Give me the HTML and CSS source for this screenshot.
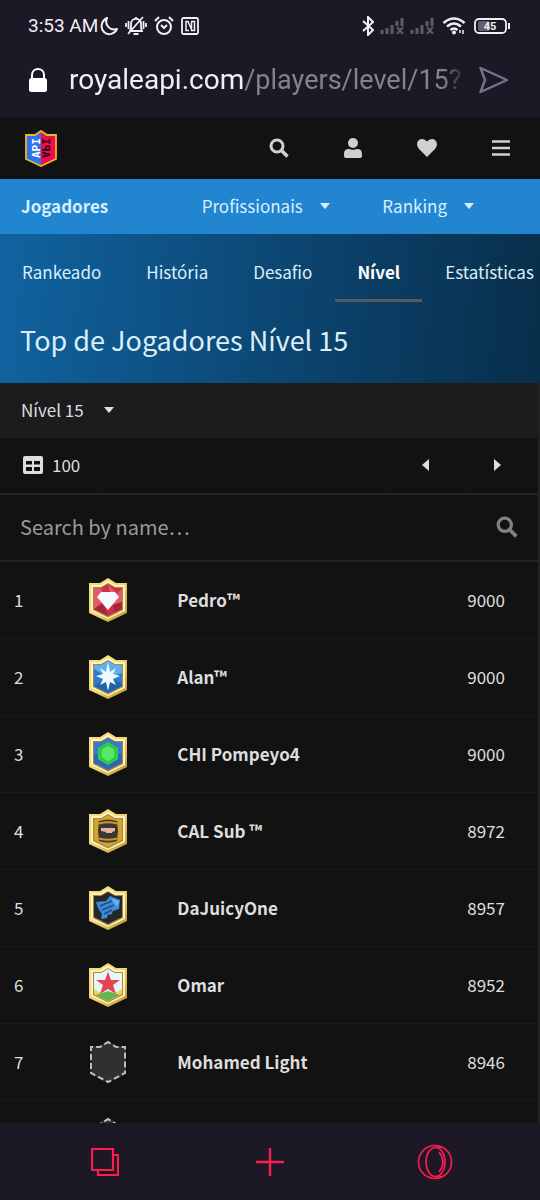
FILE: index.html
```html
<!DOCTYPE html>
<html lang="pt">
<head>
<meta charset="utf-8">
<meta name="viewport" content="width=device-width, initial-scale=1">
<title>Top de Jogadores Nível 15</title>
<link rel="stylesheet" href="styles.css">
</head>
<body>
<svg class="defs" aria-hidden="true">
  <defs>
    <linearGradient id="gold" x1="0" y1="0" x2="1" y2="1"><stop offset="0" stop-color="#f3dd83"/><stop offset=".5" stop-color="#f2d56c"/><stop offset="1" stop-color="#b98f2c"/></linearGradient>
    <symbol id="frame" viewBox="0 0 38 44">
      <path d="M19 0 27 5H38V35L19 44 0 35V5H11Z" fill="url(#gold)"/>
      <path d="M19 2.500 26.500 7H36V33L19 41 2 33V7H11.500Z" fill="#fff3bd"/>
      <path d="M19 5 26 9H34V32L19 39.500 4 32V9H12Z" fill="#a58a45"/>
    </symbol>
    <symbol id="empty" viewBox="0 0 38 44">
      <path d="M19 1 28 6H37V34L19 43 1 34V6H10Z" fill="#303030"/>
      <path d="M19 2 27 7H36V33L19 42 2 33V7H11Z" fill="none" stroke="#bdbdbd" stroke-width="2" stroke-dasharray="6 3" stroke-dashoffset="3"/>
    </symbol>
    <symbol id="search" viewBox="0 0 20 20"><circle cx="8" cy="8" r="6" fill="none" stroke="currentColor" stroke-width="3"/><path d="m12.500 12.500 6 6" stroke="currentColor" stroke-width="3.500"/></symbol>
    <symbol id="caret" viewBox="0 0 10 6"><path d="M0 0H10L5.500 5.500Q5 6 4.500 5.500Z" fill="currentColor"/></symbol>
    <symbol id="signal" viewBox="0 0 24 16"><path d="M2 12v4M7 10v6M12 7v9M17 3v5M22 0v8" stroke="currentColor" stroke-width="3"/><path d="m17 9 6 7m0-7-6 7" stroke="currentColor" stroke-width="2"/></symbol>
  </defs>
</svg>

<header class="browser">
  <div class="status">
    <div class="status-group">
      <span class="clock">3:53 AM</span>
      <svg width="18" height="20" viewBox="0 0 18 20"><path d="M7 2C1 5 0 12 4 16c4 4 11 2 13-3C10 15 4 9 7 2Z" fill="none" stroke="currentColor" stroke-width="2" stroke-linejoin="round"/></svg>
      <svg class="bell" width="22" height="20" viewBox="0 0 22 20"><path d="M5 15H17L16 12V8C16 1 6 1 6 8v4Z M11 3V1M18 1 3 18M1 7v4M3.500 5v8M21 7v4M18.500 5v8M8.500 18h5" fill="none" stroke="currentColor" stroke-width="1.800"/></svg>
      <svg width="20" height="20" viewBox="0 0 20 20"><circle cx="10" cy="11" r="7" fill="none" stroke="currentColor" stroke-width="2"/><path d="M1 5 5 1M19 5l-4-4M7 9l3 3 3-3" fill="none" stroke="currentColor" stroke-width="2"/></svg>
      <svg class="nfc" width="18" height="18" viewBox="0 0 18 18"><rect x="1" y="1" width="16" height="16" rx="1.500" fill="none" stroke="currentColor" stroke-width="1.800"/><path d="M8 13.500H5V4.500H7L11 13.500M10 4.500H13.500V13.500H10.500V4.500" fill="none" stroke="currentColor" stroke-width="1.500"/></svg>
    </div>
    <div class="status-group">
      <svg width="12" height="20" viewBox="0 0 12 20"><path d="M1 5 11 14 6 19V1l5 5L1 15" fill="none" stroke="currentColor" stroke-width="2"/></svg>
      <svg class="dim" width="24" height="16"><use href="#signal"/></svg>
      <svg class="dim signal-two" width="24" height="16"><use href="#signal"/></svg>
      <svg class="wifi" width="24" height="18" viewBox="0 0 24 18"><path d="M1.500 6Q12-3 22.500 6M5 9.500q7-6 14 0M8.500 13q3.500-3 7 0" fill="none" stroke="currentColor" stroke-width="2.600"/><circle cx="12" cy="15.500" r="2"/><path d="M18 16v-3m3 0v4" stroke="currentColor" stroke-width="1.500"/></svg>
      <svg class="battery" width="36" height="16" viewBox="0 0 36 16"><rect x="4" y="3" width="12" height="10" rx="2" fill="#625f6c"/><rect x="1" y="1" width="31" height="14" rx="4" fill="none" stroke="currentColor" stroke-width="1.800"/><path d="M35 5v6" stroke="currentColor" stroke-width="2"/><text x="16" y="12" text-anchor="middle" class="charge">45</text></svg>
    </div>
  </div>
  <div class="address">
    <svg width="18" height="26" viewBox="0 0 18 26"><path d="M3 12V8C3 0 15 0 15 8v4" fill="none" stroke="#fff" stroke-width="2"/><rect x="0" y="11" width="18" height="14" rx="2.500" fill="#fff"/></svg>
    <button class="url" type="button">royaleapi.com<span>/players/level/15?</span></button>
    <button class="plain send" type="button" aria-label="Enviar"><svg width="30" height="26" viewBox="0 0 30 26"><path d="M1.500 1 28 13 1.500 25 6 13Z" fill="none" stroke="currentColor" stroke-width="2.400" stroke-linejoin="round"/></svg></button>
  </div>
</header>

<main class="page">
  <header class="site">
    <a class="logo" href="#" aria-label="RoyaleAPI">
      <svg width="32" height="37" viewBox="0 0 32 37"><path d="M16 1 22 5H31V29L16 36 1 29V5H10Z" fill="#2e72f0"/><path d="M16 1 22 5H31V29L16 36Z" fill="#f20b48"/><g class="logo-text"><text transform="translate(15 28) rotate(-90)" fill="#fff">API</text><text transform="translate(17 28) scale(-1 1) rotate(-90)" fill="#220817">API</text></g><path d="M16 1 22 5H31V29L16 36 1 29V5H10Z" fill="none" stroke="#e9b72e" stroke-width="1.800"/></svg>
    </a>
    <nav class="tools">
      <button class="plain" type="button" aria-label="Buscar"><svg width="20" height="20"><use href="#search"/></svg></button>
      <button class="plain" type="button" aria-label="Perfil"><svg width="18" height="20" viewBox="0 0 18 20"><circle cx="9" cy="5" r="5" fill="currentColor"/><path d="M0 17c0-4 1-6 5-6 2 1 6 1 8 0 4 0 5 2 5 6v1q0 2-2 2H2q-2 0-2-2Z" fill="currentColor"/></svg></button>
      <button class="plain" type="button" aria-label="Favoritos"><svg width="20" height="18" viewBox="0 0 20 18"><path d="M10 18 2 10C-2 5 1 0 5 0q3 0 5 2.500Q12 0 15 0c4 0 7 5 3 10Z" fill="currentColor"/></svg></button>
      <button class="plain" type="button" aria-label="Menu"><svg width="18" height="16" viewBox="0 0 18 16"><path d="M0 1.500h18M0 8h18M0 14.500h18" stroke="currentColor" stroke-width="2.600"/></svg></button>
    </nav>
  </header>

  <nav class="sections">
    <a class="current" href="#">Jogadores</a>
    <button type="button" aria-haspopup="true">Profissionais<svg width="10" height="6"><use href="#caret"/></svg></button>
    <button type="button" aria-haspopup="true">Ranking<svg width="10" height="6"><use href="#caret"/></svg></button>
  </nav>

  <section class="hero">
    <nav class="tabs">
      <a href="#">Rankeado</a><a href="#">História</a><a href="#">Desafio</a><a class="active" href="#" aria-current="page">Nível</a><a href="#">Estatísticas</a>
    </nav>
    <h1>Top de Jogadores Nível 15</h1>
  </section>

  <section class="panel">
    <div class="filter">
      <label class="level">
        <select aria-label="Nível"><option>Nível 15</option></select>
        <svg width="10" height="6"><use href="#caret"/></svg>
      </label>
    </div>
    <div class="pager">
      <button class="size" type="button"><svg width="20" height="18" viewBox="0 0 20 18"><path fill-rule="evenodd" d="M2 0H18Q20 0 20 2V16Q20 18 18 18H2Q0 18 0 16V2Q0 0 2 0ZM3 5V8.500H9V5ZM11 5V8.500H17V5ZM3 11V15H9V11ZM11 11V15H17V11Z" fill="currentColor"/></svg>100</button>
      <button class="step prev" type="button" aria-label="Anterior"><svg width="8" height="12" viewBox="0 0 8 12"><path d="M7 0V12L0 6Z" fill="currentColor"/></svg></button>
      <button class="step next" type="button" aria-label="Próxima"><svg width="8" height="12" viewBox="0 0 8 12"><path d="M1 0V12L8 6Z" fill="currentColor"/></svg></button>
    </div>
    <label class="find">
      <input type="text" placeholder="Search by name…" aria-label="Search by name">
      <svg width="22" height="22"><use href="#search"/></svg>
    </label>
    <table class="players">
      <tbody>
        <tr><td>1</td><td><svg class="badge" viewBox="0 0 38 44"><use href="#frame"/><path d="M19 6 26 10H33V31L19 38 5 31V10H12Z" fill="#cc3044"/><path d="M5 10 12 10 16 22 5 31ZM19 6 28 16 33 10V24L24 27Z" fill="#e25a68"/><path d="M5 31 14 26 19 38ZM24 27 33 24V31L26 34Z" fill="#a82537"/><path d="M12 14H26L30 19 19 32 8 19Z" fill="#f4faff"/></svg></td><td>Pedro™</td><td>9000</td></tr>
        <tr><td>2</td><td><svg class="badge" viewBox="0 0 38 44"><use href="#frame"/><path d="M19 6 26 10H33V31L19 38 5 31V10H12Z" fill="#2c7ccf"/><path d="M19 6 26 10H33V18L19 22 5 14V10H12Z" fill="#60b0ed"/><path d="M19 22 33 29V31L19 38 5 31Z" fill="#2162ac"/><path d="M19 7 21 17 27 13 24 19 31 21 24 24 27 30 21 27 19 36 17 27 11 30 14 24 7 21 14 19 11 13 17 17Z" fill="#effaff"/></svg></td><td>Alan™</td><td>9000</td></tr>
        <tr><td>3</td><td><svg class="badge" viewBox="0 0 38 44"><use href="#frame"/><path d="M19 6 26 10H33V31L19 38 5 31V10H12Z" fill="#2f66b5"/><path d="M5 10H12L19 6 26 10H33V22H5Z" fill="#3c78c4"/><path d="M19 10 29 16V27L19 33 9 27V16Z" fill="#2ed246"/><path d="M19 13 26 17V26L19 30 12 26V17Z" fill="#55e967" stroke="#22b53a"/></svg></td><td>CHI Pompeyo4</td><td>9000</td></tr>
        <tr><td>4</td><td><svg class="badge" viewBox="0 0 38 44"><use href="#frame"/><path d="M19 6 26 10H33V31L19 38 5 31V10H12Z" fill="#d4a12b"/><path d="M10 12Q19 9 28 12L29 22 28 32Q19 35 10 32L9 22Z" fill="#393837"/><path d="M10 14.500Q19 12 28 14.500M10 29.500Q19 32 28 29.500" fill="none" stroke="#c9992f" stroke-width="2"/><path d="M12 19H26V22L23 23V24H17V23L12 22Z" fill="#e9b29b"/></svg></td><td>CAL Sub ™</td><td>8972</td></tr>
        <tr><td>5</td><td><svg class="badge" viewBox="0 0 38 44"><use href="#frame"/><path d="M19 6 26 10H33V31L19 38 5 31V10H12Z" fill="#25282b"/><path d="M7 16 17 15 21 10 31 14 30 23 24 25 22 29 19 28 18 32 12 33 13 28 9 22Z" fill="#3b8bdd"/><path d="m11 20 12-5M13 24l12-5M15 28l8-4" stroke="#214f86" stroke-width="1.500"/><path d="m22 12 8 3-2 6Z" fill="#65b3f5"/></svg></td><td>DaJuicyOne</td><td>8957</td></tr>
        <tr><td>6</td><td><svg class="badge" viewBox="0 0 38 44"><use href="#frame"/><path d="M19 6 26 10H33V31L19 38 5 31V10H12Z" fill="#e8f4f5"/><path d="M5 26 12 30H26L33 26V31L19 38 5 31Z" fill="#f0d64f"/><path d="M7 32 19 28 31 32 19 38Z" fill="#5fb94b"/><path d="M19 9 22 17H31L24 22 27 31 19 26 11 31 14 22 7 17H16Z" fill="#e34352"/></svg></td><td>Omar</td><td>8952</td></tr>
        <tr><td>7</td><td><svg class="badge"><use href="#empty"/></svg></td><td>Mohamed Light</td><td>8946</td></tr>
        <tr><td></td><td><svg class="badge"><use href="#empty"/></svg></td><td></td><td></td></tr>
      </tbody>
    </table>
  </section>
</main>

<footer class="dock">
  <button class="plain" type="button" aria-label="Abas"><svg width="28" height="28" viewBox="0 0 28 28"><path d="M1 1H22V22H1ZM22 7h5V27H7V22" fill="none" stroke="currentColor" stroke-width="2.200"/></svg></button>
  <button class="plain" type="button" aria-label="Nova aba"><svg width="28" height="28" viewBox="0 0 28 28"><path d="M14 0V28M0 14H28" stroke="currentColor" stroke-width="2.400"/></svg></button>
  <button class="plain" type="button" aria-label="Opera"><svg width="36" height="36" viewBox="0 0 36 36"><g fill="none" stroke="currentColor" stroke-width="1.600"><circle cx="18" cy="18" r="16.500"/><ellipse cx="18.500" cy="18" rx="9.500" ry="14.500"/><path d="M18.500 3.500q4-1 7 0M18.500 32.500q4 1 7 0M22 8q8 10 0 20"/></g></svg></button>
</footer>
</body>
</html>
```

FILE: styles.css
```css
* { box-sizing: border-box; }

body {
  margin: 0;
  height: 100vh;
  display: flex;
  flex-direction: column;
  overflow: hidden;
  background: #121212;
  color: #dedede;
  font-family: "Noto Sans CJK SC", "Open Sans", sans-serif;
  font-size: 17px;
  line-height: 24px;
}

svg { display: block; flex: none; }
a { color: inherit; text-decoration: none; }
button, input, select { font: inherit; color: inherit; }
.defs { position: absolute; width: 0; height: 0; }

button {
  margin: 0;
  padding: 0;
  border: 0;
  background: none;
  text-align: left;
}

.plain { display: grid; place-items: center; }

/* Browser chrome */
.browser {
  flex: none;
  background: #1c1826;
  color: #f0eff3;
  font-family: Roboto, sans-serif;
}

.status {
  display: flex;
  align-items: center;
  justify-content: space-between;
  height: 52px;
  padding: 0 30px 0 28px;
}

.status-group { display: flex; align-items: center; gap: 6px; }
.status-group:first-child { gap: 5px; }
.clock { margin-right: -3px; font-size: 19px; }
.bell { margin: 0 2px; }
.nfc { margin-left: 2px; }
.dim { color: #5e5b67; }
.signal-two { margin-right: 2px; }
.wifi { fill: currentColor; margin-right: 2px; }
.charge { fill: #f0eff3; font-size: 11px; font-weight: 700; }

.address {
  display: flex;
  align-items: center;
  height: 65px;
  padding: 0 31px 10px 29px;
}

.url {
  flex: 1;
  min-width: 0;
  margin: 0 12px 0 22px;
  overflow: hidden;
  white-space: nowrap;
  font-size: 28px;
  line-height: 40px;
  -webkit-mask-image: linear-gradient(90deg, #000 94%, transparent);
  mask-image: linear-gradient(90deg, #000 94%, transparent);
}

.url span { color: #85828e; font-size: 27px; }
.send { color: #777386; }

/* Site header */
.page { flex: 1; min-height: 0; overflow: hidden; }

.site {
  display: flex;
  align-items: center;
  justify-content: space-between;
  height: 62px;
  padding: 0 14px 0 25px;
}

.logo-text { font: 700 11px "DejaVu Sans Mono", monospace; }
.tools { display: flex; color: #d0d0d0; }
.tools .plain { width: 50px; height: 48px; margin-left: 24px; }

.sections {
  display: grid;
  grid-template-columns: repeat(3, 1fr);
  gap: 2px;
  height: 55px;
  background: #2185d0;
  color: #d8efff;
}

.sections > * {
  display: flex;
  align-items: center;
  gap: 17px;
  padding: 0 0 2px 21px;
}

.current { font-weight: 700; }

.hero {
  height: 149px;
  background: linear-gradient(95deg, #1063a0, #0b3f67 65%, #082e4a);
  color: #dceefa;
}

.tabs { display: flex; gap: 1px; overflow: hidden; }

.tabs a {
  flex: none;
  padding: 26px 22px 15px;
  border-bottom: 3px solid transparent;
}

.tabs .active {
  border-color: #565a60;
  color: #fff;
  font-weight: 700;
}

h1 {
  margin: 18px 20px 0;
  font-size: 27px;
  font-weight: 400;
  line-height: 40px;
}

/* Leaderboard */
.panel { border-right: 2px solid #222; }
.filter { height: 55px; background: #1b1c1d; }

.level {
  display: inline-flex;
  align-items: center;
  gap: 20px;
  height: 55px;
  padding: 0 17px 2px 21px;
  border-right: 1px solid #1f2021;
}

.level select {
  appearance: none;
  padding: 0;
  border: 0;
  background: none;
}

.pager { display: flex; height: 55px; }

.size {
  display: flex;
  align-items: center;
  gap: 9px;
  margin-right: auto;
  padding: 0 19px 2px 23px;
  border-right: 1px solid #161616;
}

.step {
  display: grid;
  place-items: center;
  padding-bottom: 2px;
  border-left: 1px solid #161616;
}

.prev { width: 76px; padding-right: 4px; }
.next { width: 73px; padding-right: 10px; }

.find {
  display: flex;
  align-items: center;
  height: 69px;
  padding: 0 20px 1px;
  border: solid #242424;
  border-width: 2px 0;
  color: #808080;
}

.find input {
  flex: 1;
  min-width: 0;
  padding: 0;
  border: 0;
  outline: 0;
  background: none;
  font-size: 20px;
}

.find input::placeholder { color: #9a9a9a; opacity: 1; }

.players {
  width: 100%;
  border-spacing: 0;
  table-layout: fixed;
}

.players td {
  height: 77px;
  padding: 0 14px;
  border-bottom: 1px solid #191919;
}

.players td:nth-child(1) { width: 14%; }
.players td:nth-child(2) { width: 88px; }
.players td:nth-child(3) { font-weight: 700; }
.players td:nth-child(4) { width: 104px; padding-right: 33px; text-align: right; }
.badge { width: 38px; height: 44px; }

/* Bottom bar */
.dock {
  display: flex;
  align-items: center;
  justify-content: space-around;
  flex: none;
  height: 77px;
  padding: 0 22px;
  background: #1c1826;
  color: #fa1e4e;
}

.dock .plain { width: 48px; height: 48px; }
```
